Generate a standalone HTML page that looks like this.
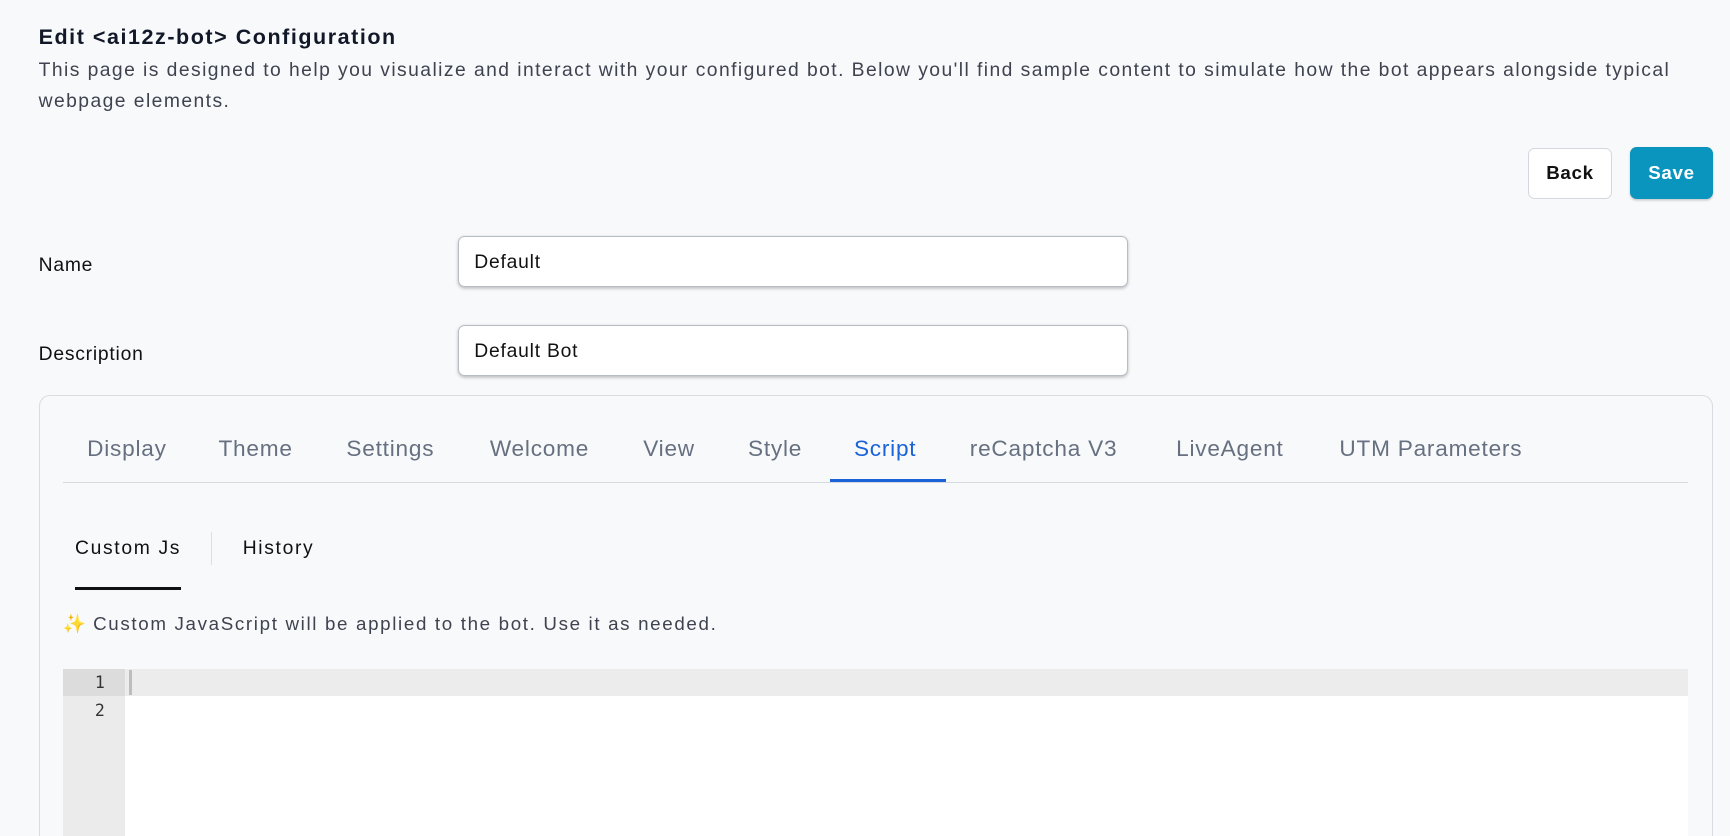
<!DOCTYPE html>
<html><head><meta charset="utf-8">
<style>
html{margin:0;padding:0;background:#f8f9fb;width:1730px;height:836px;overflow:hidden;}
body{margin:0;padding:0;background:#f8f9fb;width:1568px;height:758px;overflow:hidden;zoom:1.1033;font-family:"Liberation Sans",sans-serif;position:relative;color:#111827;}
.abs{position:absolute;}
h1{position:absolute;left:35px;top:23px;margin:0;font-size:19.5px;font-weight:bold;color:#111827;letter-spacing:1.4px;}
.desc{left:35px;top:51px;font-size:17.5px;line-height:28px;color:#3f4350;width:1500px;letter-spacing:1.3px;}
.btn{position:absolute;box-sizing:border-box;border-radius:6px;font-size:17px;font-weight:bold;display:flex;align-items:center;justify-content:center;letter-spacing:0.6px;}
.back{left:1385px;top:134px;width:76px;height:46px;background:#fff;border:1px solid #d4d7dd;color:#111;}
.save{left:1477px;top:133px;width:76px;height:47px;background:#0a95bf;color:#fff;box-shadow:0 1px 2px rgba(0,0,0,.2);}
.lbl{left:35px;font-size:17.5px;color:#111;letter-spacing:0.7px;}
.inp{position:absolute;left:415px;width:607px;height:46px;box-sizing:border-box;background:#fff;border:1px solid #b8bcc4;border-radius:6px;box-shadow:0 1px 3px rgba(0,0,0,.25);font-size:17.5px;padding-left:14px;padding-top:3px;display:flex;align-items:center;color:#111;letter-spacing:0.7px;}
.panel{left:35px;top:358px;width:1518px;height:400px;box-sizing:border-box;border:1px solid #d9dce1;border-bottom:none;border-radius:10px 10px 0 0;background:#f8f9fb;}
.tabs{left:57px;top:384px;width:1473px;height:53px;border-bottom:1px solid #d6d9de;}
.tab{position:absolute;top:11px;font-size:20.5px;color:#667080;letter-spacing:0.7px;}
.tab.on{color:#1a63d8;}
.uline{position:absolute;left:695px;top:50px;width:105px;height:3px;background:#1a63d8;}
.sub{font-size:17.5px;color:#111;top:488px;letter-spacing:1.5px;}
.note{left:57px;top:556px;font-size:17px;color:#3f4350;letter-spacing:1.5px;}
.editor{left:57px;top:606px;width:1473px;height:152px;background:#fff;overflow:hidden;}
.gutter{position:absolute;left:0;top:0;width:56px;height:152px;background:#ebebeb;}
.g1{position:absolute;left:0;top:0;width:56px;height:25px;background:#dcdcdc;}
.l1{position:absolute;left:56px;top:0;right:0;height:25px;background:#ececec;}
.cur{position:absolute;left:60px;top:1px;width:3px;height:23px;background:#bdbdbd;}
.num{position:absolute;width:38px;text-align:right;font-family:"DejaVu Sans Mono","Liberation Mono",monospace;font-size:15px;color:#333;}
</style></head><body>
<h1>Edit &lt;ai12z-bot&gt; Configuration</h1>
<div class="abs desc">This page is designed to help you visualize and interact with your configured bot. Below you'll find sample content to simulate how the bot appears alongside typical webpage elements.</div>
<div class="btn back">Back</div>
<div class="btn save">Save</div>
<div class="abs lbl" style="top:231px">Name</div>
<div class="inp" style="top:214px">Default</div>
<div class="abs lbl" style="top:312px">Description</div>
<div class="inp" style="top:295px">Default Bot</div>
<div class="abs panel"></div>
<div class="abs tabs">
<span class="tab" style="left:22px">Display</span>
<span class="tab" style="left:141px">Theme</span>
<span class="tab" style="left:257px">Settings</span>
<span class="tab" style="left:387px">Welcome</span>
<span class="tab" style="left:526px">View</span>
<span class="tab" style="left:621px">Style</span>
<span class="tab on" style="left:717px">Script</span>
<span class="tab" style="left:822px">reCaptcha V3</span>
<span class="tab" style="left:1009px">LiveAgent</span>
<span class="tab" style="left:1157px">UTM Parameters</span>
<div class="uline"></div>
</div>
<div class="abs sub" style="left:68px">Custom Js</div>
<div class="abs" style="left:191px;top:482px;width:1px;height:30px;background:#dcdfe3"></div>
<div class="abs sub" style="left:220px">History</div>
<div class="abs" style="left:68px;top:532px;width:96px;height:3px;background:#111"></div>
<div class="abs note"><span style="color:#f5c518;letter-spacing:0">✨</span> Custom JavaScript will be applied to the bot. Use it as needed.</div>
<div class="abs editor">
<div class="gutter"></div><div class="g1"></div><div class="l1"></div><div class="cur"></div>
<div class="num" style="top:4px">1</div>
<div class="num" style="top:29px">2</div>
</div>
</body></html>
